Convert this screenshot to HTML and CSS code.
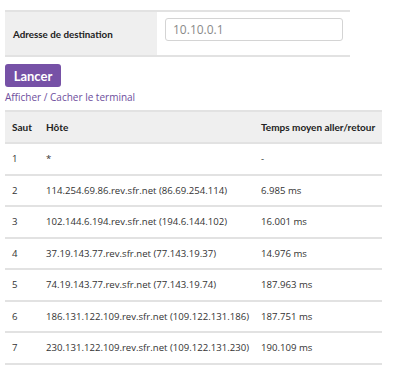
FILE: index.html
```html
<!DOCTYPE html>
<html>
  <head>
    <meta charset="utf-8">
    <title>Traceroute</title>
    <link rel="stylesheet" href="styles.css">
  </head>
  <body>
    <div class="page">
      <table class="form">
        <tr>
          <th>Adresse de destination</th>
          <td><input type="text" placeholder="10.10.0.1"></td>
        </tr>
      </table>
      <button class="launch">Lancer</button>
      <a class="toggle" href="#">Afficher / Cacher le terminal</a>
      <table class="results">
        <colgroup>
          <col class="hop">
          <col class="host">
          <col class="time">
        </colgroup>
        <thead>
          <tr>
            <th>Saut</th>
            <th>Hôte</th>
            <th>Temps moyen aller/retour</th>
          </tr>
        </thead>
        <tbody>
          <tr><td>1</td><td>*</td><td>-</td></tr>
          <tr><td>2</td><td>114.254.69.86.rev.sfr.net (86.69.254.114)</td><td>6.985 ms</td></tr>
          <tr><td>3</td><td>102.144.6.194.rev.sfr.net (194.6.144.102)</td><td>16.001 ms</td></tr>
          <tr><td>4</td><td>37.19.143.77.rev.sfr.net (77.143.19.37)</td><td>14.976 ms</td></tr>
          <tr><td>5</td><td>74.19.143.77.rev.sfr.net (77.143.19.74)</td><td>187.963 ms</td></tr>
          <tr><td>6</td><td>186.131.122.109.rev.sfr.net (109.122.131.186)</td><td>187.751 ms</td></tr>
          <tr><td>7</td><td>230.131.122.109.rev.sfr.net (109.122.131.230)</td><td>190.109 ms</td></tr>
        </tbody>
      </table>
    </div>
  </body>
</html>
```

FILE: styles.css
```css
body {
  margin: 0;
  font-family: "Open Sans", "Noto Sans", sans-serif;
  font-size: 9.6px;
  color: #333;
  background: #fff;
}

.page {
  padding: 10px 0 0 5px;
}

table {
  border-collapse: collapse;
}

th {
  font-family: Lato, "Open Sans", sans-serif;
  font-weight: 700;
  color: #222;
  white-space: nowrap;
}

.form {
  width: 345px;
  border-top: 2px solid #e2e2e2;
  border-bottom: 2px solid #e2e2e2;
}

.form th {
  width: 152px;
  height: 45px;
  padding: 0 0 0 8px;
  background: #efefef;
  text-align: left;
  font-size: 9.8px;
  box-sizing: border-box;
}

.form td {
  padding: 0 7px 0 8px;
}

.form input {
  display: block;
  width: 178px;
  height: 23px;
  box-sizing: border-box;
  margin-top: -8px;
  padding: 0 7px;
  border: 1px solid #d4d4d4;
  border-radius: 3px;
  font-family: inherit;
  font-size: 12px;
  color: #555;
}

.form input::placeholder {
  color: #8a8a8a;
}

.launch {
  display: block;
  margin-top: 7px;
  width: 56px;
  height: 23px;
  padding: 0;
  border: none;
  border-radius: 3px;
  background: #7651a6;
  color: #fff;
  font-family: Lato, "Open Sans", sans-serif;
  font-size: 13px;
  font-weight: 700;
}

.toggle {
  display: block;
  margin-top: 2px;
  line-height: 16px;
  font-size: 10px;
  color: #6d4d9d;
  text-decoration: none;
}

.results {
  margin-top: 5px;
  width: 377px;
  table-layout: fixed;
  border-top: 2px solid #e2e2e2;
}

.results .hop {
  width: 34px;
}

.results .host {
  width: 215px;
}

.results th {
  height: 30px;
  padding: 0 7px;
  background: #efefef;
  text-align: left;
  font-size: 10px;
}

.results td {
  height: 29.5px;
  padding: 0 7px;
  border-top: 2px solid #e2e2e2;
  white-space: nowrap;
}

.results tbody tr:last-child td {
  border-bottom: 2px solid #e2e2e2;
}
```
